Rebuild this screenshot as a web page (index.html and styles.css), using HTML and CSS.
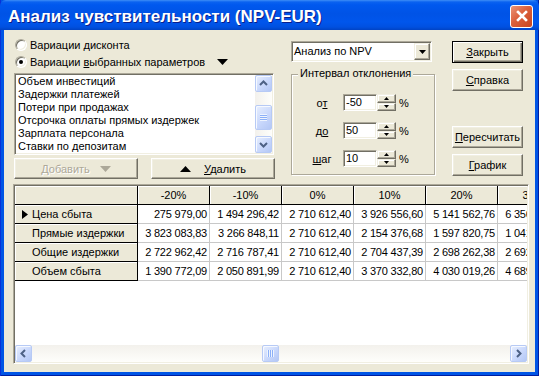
FILE: index.html
```html
<!DOCTYPE html>
<html lang="ru">
<head>
<meta charset="utf-8">
<title>Анализ чувствительности (NPV-EUR)</title>
<link rel="stylesheet" href="styles.css">
</head>
<body>
<div class="window">
  <div class="titlebar">
    <span class="title">Анализ чувствительности (NPV-EUR)</span>
    <span class="close"><svg width="20" height="20" viewBox="0 0 20 20"><path d="M6 6 L14 14 M14 6 L6 14" stroke="#fff" stroke-width="2.6" stroke-linecap="square"/></svg></span>
  </div>
  <div class="client">
    <div class="top">
      <div class="col-left">
        <div class="radio"><span class="rb"></span><span>Вариации <u>д</u>исконта</span></div>
        <div class="radio"><span class="rb on"></span><span>Вариации <u>в</u>ыбранных параметров</span><svg class="tri-r" width="11" height="6" viewBox="0 0 11 6"><path d="M0 0 H11 L5.5 6 Z" fill="#000"/></svg></div>
        <div class="listbox">
          <ul class="items">
            <li>Объем инвестиций</li>
            <li>Задержки платежей</li>
            <li>Потери при продажах</li>
            <li>Отсрочка оплаты прямых издержек</li>
            <li>Зарплата персонала</li>
            <li>Ставки по депозитам</li>
          </ul>
          <div class="vscroll">
            <span class="sbtn"><svg width="15" height="15" viewBox="0 0 15 15"><polyline points="4,9 7.5,5.5 11,9" fill="none" stroke="#4D6185" stroke-width="2"/></svg></span>
            <span class="vtrack"><span class="sbtn vthumb"><span class="grip-h"></span></span></span>
            <span class="sbtn"><svg width="15" height="15" viewBox="0 0 15 15"><polyline points="4,6 7.5,9.5 11,6" fill="none" stroke="#4D6185" stroke-width="2"/></svg></span>
          </div>
        </div>
        <div class="btn-row">
          <span class="btn wide disabled"><span><u>Д</u>обавить</span><svg width="11" height="6" viewBox="0 0 11 6"><path d="M0 0 H11 L5.5 6 Z" fill="#ACA899"/></svg></span>
          <span class="btn wide"><svg width="11" height="6" viewBox="0 0 11 6"><path d="M0 6 H11 L5.5 0 Z" fill="#000"/></svg><span><u>У</u>далить</span></span>
        </div>
      </div>
      <div class="col-mid">
        <div class="combo">
          <span class="combo-text">Анализ по NPV</span>
          <span class="combo-btn"><svg width="7" height="4" viewBox="0 0 7 4"><path d="M0 0 H7 L3.5 4 Z" fill="#000"/></svg></span>
        </div>
        <div class="group">
          <span class="legend">Интервал отклонения</span>
          <div class="field-row">
            <span class="field-label">о<u>т</u></span>
            <span class="edit">-50</span>
            <span class="spin"><span><svg width="5" height="3" viewBox="0 0 5 3"><path d="M0 3 H5 L2.5 0 Z" fill="#000"/></svg></span><span><svg width="5" height="3" viewBox="0 0 5 3"><path d="M0 0 H5 L2.5 3 Z" fill="#000"/></svg></span></span>
            <span class="pct">%</span>
          </div>
          <div class="field-row">
            <span class="field-label">д<u>о</u></span>
            <span class="edit">50</span>
            <span class="spin"><span><svg width="5" height="3" viewBox="0 0 5 3"><path d="M0 3 H5 L2.5 0 Z" fill="#000"/></svg></span><span><svg width="5" height="3" viewBox="0 0 5 3"><path d="M0 0 H5 L2.5 3 Z" fill="#000"/></svg></span></span>
            <span class="pct">%</span>
          </div>
          <div class="field-row">
            <span class="field-label"><u>ш</u>аг</span>
            <span class="edit">10</span>
            <span class="spin"><span><svg width="5" height="3" viewBox="0 0 5 3"><path d="M0 3 H5 L2.5 0 Z" fill="#000"/></svg></span><span><svg width="5" height="3" viewBox="0 0 5 3"><path d="M0 0 H5 L2.5 3 Z" fill="#000"/></svg></span></span>
            <span class="pct">%</span>
          </div>
        </div>
      </div>
      <div class="col-right">
        <span class="btn default"><span><u>З</u>акрыть</span></span>
        <span class="btn b2"><span><u>С</u>правка</span></span>
        <span class="btn b3"><span><u>П</u>ересчитать</span></span>
        <span class="btn b4"><span><u>Г</u>рафик</span></span>
      </div>
    </div>
    <div class="grid">
      <div class="grid-body">
        <div class="grid-table">
          <span class="cell fixed"></span>
          <span class="cell fixed">-20%</span>
          <span class="cell fixed">-10%</span>
          <span class="cell fixed">0%</span>
          <span class="cell fixed">10%</span>
          <span class="cell fixed">20%</span>
          <span class="cell fixed">30%</span>

          <span class="cell fixed rowhead"><svg class="marker" width="6" height="9" viewBox="0 0 6 9"><path d="M0 0 L6 4.5 L0 9 Z" fill="#000"/></svg><span>Цена сбыта</span></span>
          <span class="cell">275 979,00</span>
          <span class="cell">1 494 296,42</span>
          <span class="cell">2 710 612,40</span>
          <span class="cell">3 926 556,60</span>
          <span class="cell">5 141 562,76</span>
          <span class="cell">6 356 568,92</span>

          <span class="cell fixed rowhead"><span class="marker"></span><span>Прямые издержки</span></span>
          <span class="cell">3 823 083,83</span>
          <span class="cell">3 266 848,11</span>
          <span class="cell">2 710 612,40</span>
          <span class="cell">2 154 376,68</span>
          <span class="cell">1 597 820,75</span>
          <span class="cell">1 041 264,82</span>

          <span class="cell fixed rowhead"><span class="marker"></span><span>Общие издержки</span></span>
          <span class="cell">2 722 962,42</span>
          <span class="cell">2 716 787,41</span>
          <span class="cell">2 710 612,40</span>
          <span class="cell">2 704 437,39</span>
          <span class="cell">2 698 262,38</span>
          <span class="cell">2 692 087,37</span>

          <span class="cell fixed rowhead"><span class="marker"></span><span>Объем сбыта</span></span>
          <span class="cell">1 390 772,09</span>
          <span class="cell">2 050 891,99</span>
          <span class="cell">2 710 612,40</span>
          <span class="cell">3 370 332,80</span>
          <span class="cell">4 030 019,26</span>
          <span class="cell">4 689 705,72</span>
        </div>
      </div>
      <div class="hscroll">
        <span class="sbtn"><svg width="15" height="15" viewBox="0 0 15 15"><polyline points="9,4 5.5,7.5 9,11" fill="none" stroke="#4D6185" stroke-width="2"/></svg></span>
        <span class="htrack"><span class="sbtn hthumb"><span class="grip-v"></span></span></span>
        <span class="sbtn"><svg width="15" height="15" viewBox="0 0 15 15"><polyline points="6,4 9.5,7.5 6,11" fill="none" stroke="#4D6185" stroke-width="2"/></svg></span>
      </div>
    </div>
  </div>
</div>
</body>
</html>
```
FILE: styles.css
```css
* { box-sizing: border-box; }
html, body { margin: 0; padding: 0; }
body {
  width: 539px;
  height: 376px;
  overflow: hidden;
  background: #0054E3;
  font-family: "Liberation Sans", Arial, sans-serif;
  font-size: 11px;
  color: #000;
}
u { text-decoration: underline; text-underline-offset: 1px; }

.window {
  width: 539px;
  height: 376px;
  display: flex;
  flex-direction: column;
  background: #0055E5;
  box-shadow: inset 1px 0 0 #0831D9, inset -1px 0 0 #001EA0, inset 0 -1px 0 #001EA0;
}

.titlebar {
  height: 30px;
  flex: none;
  display: flex;
  align-items: center;
  justify-content: space-between;
  padding: 0 6px 0 8px;
  background: linear-gradient(to bottom, #3E8EF6 0px, #0A62F0 2px, #0058EE 5px, #0053E6 14px, #0056EC 22px, #0050E0 27px, #0043C4 30px);
  border-radius: 6px 6px 0 0;
}
.title {
  color: #fff;
  font-family: "Liberation Sans", Arial, sans-serif;
  font-weight: bold;
  font-size: 17px;
  padding-top: 3px;
  text-shadow: 1px 1px 0 #0A1E8A;
  white-space: nowrap;
}
.close {
  width: 23px;
  height: 23px;
  margin-top: 2px;
  border: 1px solid #fff;
  border-radius: 3px;
  background: linear-gradient(135deg, #EA9477 0%, #DB603C 45%, #C8441F 100%);
  display: flex;
  align-items: center;
  justify-content: center;
}

.client {
  flex: 1;
  margin: 0 4px 4px 4px;
  background: #ECE9D8;
  padding: 6px 0 8px 10px;
  display: flex;
  flex-direction: column;
}

.top { display: flex; height: 143px; flex: none; }

.col-left { width: 260px; display: flex; flex-direction: column; }
.radio {
  height: 17px;
  display: flex;
  align-items: center;
  gap: 3px;
  padding-left: 1px;
  white-space: nowrap;
}
.rb {
  width: 12px;
  height: 12px;
  border-radius: 50%;
  background: #fff;
  border: 1px solid;
  border-color: #ACA899 #fff #fff #ACA899;
  box-shadow: inset 1px 1px 0 #716F64, inset -1px -1px 0 #F1EFE2;
  display: flex;
  align-items: center;
  justify-content: center;
  flex: none;
}
.rb.on::after {
  content: "";
  width: 4px;
  height: 4px;
  border-radius: 50%;
  background: #000;
}
.tri-r { margin-left: 9px; }

.listbox {
  margin-top: 3px;
  height: 82px;
  display: flex;
  background: #fff;
  border: 1px solid;
  border-color: #ACA899 #fff #fff #ACA899;
  box-shadow: inset 1px 1px 0 #716F64, inset -1px -1px 0 #F1EFE2;
  padding: 1px;
}
.items {
  list-style: none;
  margin: 0;
  padding: 0 0 0 2px;
  flex: 1;
  overflow: hidden;
}
.items li { height: 13px; line-height: 13px; white-space: nowrap; }

.vscroll {
  width: 17px;
  display: flex;
  flex-direction: column;
  background: linear-gradient(to right, #F3F1EC, #FEFEFB);
}
.sbtn {
  width: 17px;
  height: 17px;
  flex: none;
  border: 1px solid #B7CAF5;
  border-radius: 2px;
  background: linear-gradient(135deg, #E8EFFE 0%, #C9D8FC 55%, #B3C7F5 100%);
  box-shadow: inset 1px 1px 0 #F6F9FF;
  display: flex;
  align-items: center;
  justify-content: center;
}
.vtrack { flex: 1; display: flex; flex-direction: column; }
.vthumb { height: 25px; margin-top: 13px; }
.grip-h {
  width: 7px;
  height: 7px;
  background: repeating-linear-gradient(to bottom, #EEF4FE 0 1px, #8CB0F8 1px 2px);
}

.btn-row { margin-top: 3px; display: flex; gap: 13px; height: 21px; }
.btn {
  background: #ECE9D8;
  border: 1px solid;
  border-color: #fff #716F64 #716F64 #fff;
  box-shadow: inset -1px -1px 0 #ACA899, inset 1px 1px 0 #F1EFE2;
  display: flex;
  align-items: center;
  justify-content: center;
  white-space: nowrap;
  height: 22px;
  flex: none;
}
.btn.wide { width: 124px; height: 21px; gap: 10px; }
.btn.wide:last-child { gap: 13px; }
.btn.disabled { color: #ACA899; text-shadow: 1px 1px 0 #fff; }
.btn.default {
  border-color: #000;
  box-shadow: inset 1px 1px 0 #fff, inset -1px -1px 0 #716F64, inset -2px -2px 0 #ACA899;
}

.col-mid {
  width: 144px;
  margin-left: 17px;
  display: flex;
  flex-direction: column;
}
.combo {
  margin-top: 5px;
  width: 141px;
  height: 21px;
  display: flex;
  background: #fff;
  border: 1px solid;
  border-color: #ACA899 #fff #fff #ACA899;
  box-shadow: inset 1px 1px 0 #716F64, inset -1px -1px 0 #F1EFE2;
  padding: 1px;
}
.combo-text { flex: 1; line-height: 17px; padding-left: 1px; white-space: nowrap; }
.combo-btn {
  width: 16px;
  background: #ECE9D8;
  border: 1px solid;
  border-color: #F1EFE2 #716F64 #716F64 #F1EFE2;
  box-shadow: inset -1px -1px 0 #ACA899, inset 1px 1px 0 #fff;
  display: flex;
  align-items: center;
  justify-content: center;
}

.group {
  margin-top: 12px;
  position: relative;
  height: 101px;
  border: 1px solid #ACA899;
  box-shadow: inset 1px 1px 0 #fff, 1px 1px 0 #fff;
  padding: 19px 0 0 20px;
  display: flex;
  flex-direction: column;
  gap: 11px;
}
.legend {
  position: absolute;
  top: -8px;
  left: 6px;
  background: #ECE9D8;
  padding: 0 2px;
  line-height: 13px;
  white-space: nowrap;
}
.field-row { display: flex; align-items: center; height: 17px; }
.field-label { width: 20px; text-align: center; margin-right: 11px; }
.edit {
  width: 34px;
  height: 17px;
  background: #fff;
  border: 1px solid;
  border-color: #ACA899 #fff #fff #ACA899;
  box-shadow: inset 1px 1px 0 #716F64, inset -1px -1px 0 #F1EFE2;
  padding-left: 2px;
  line-height: 15px;
}
.spin { width: 19px; height: 17px; display: flex; flex-direction: column; }
.spin > span {
  flex: 1;
  background: #ECE9D8;
  border: 1px solid;
  border-color: #F1EFE2 #716F64 #716F64 #F1EFE2;
  box-shadow: inset -1px -1px 0 #ACA899, inset 1px 1px 0 #fff;
  display: flex;
  align-items: center;
  justify-content: center;
}
.pct { margin-left: 3px; }

.col-right {
  width: 71px;
  margin-left: 17px;
  display: flex;
  flex-direction: column;
  padding-top: 5px;
}
.b2 { margin-top: 6px; }
.b3 { margin-top: 35px; }
.b4 { margin-top: 6px; }

.grid {
  margin-top: 5px;
  margin-left: -1px;
  width: 516px;
  height: 180px;
  flex: none;
  background: #fff;
  border: 1px solid;
  border-color: #ACA899 #fff #fff #ACA899;
  box-shadow: inset 1px 1px 0 #716F64, inset -1px -1px 0 #F1EFE2;
  padding: 1px;
  display: flex;
  flex-direction: column;
}
.grid-body { flex: 1; overflow: hidden; }
.grid-table {
  display: grid;
  grid-template-columns: 123px repeat(6, 72px);
  grid-auto-rows: 19px;
  width: 555px;
}
.cell {
  border-right: 1px solid #C8C8C8;
  border-bottom: 1px solid #C8C8C8;
  padding: 0 2px;
  line-height: 18px;
  white-space: nowrap;
  overflow: hidden;
  text-align: right;
  letter-spacing: -0.2px;
}
.cell.fixed {
  background: #ECE9D8;
  border-color: #000;
  box-shadow: inset 1px 1px 0 #fff;
  text-align: center;
  letter-spacing: 0;
}
.cell.rowhead {
  display: flex;
  align-items: center;
  padding-left: 7px;
  text-align: left;
}
.marker { width: 6px; height: 9px; flex: none; margin-right: 4px; }

.hscroll {
  height: 17px;
  flex: none;
  display: flex;
  background: linear-gradient(to bottom, #F3F1EC, #FEFEFB);
}
.htrack { flex: 1; display: flex; }
.hthumb { width: 17px; margin-left: 230px; }
.grip-v {
  width: 7px;
  height: 7px;
  background: repeating-linear-gradient(to right, #EEF4FE 0 1px, #8CB0F8 1px 2px);
}
```
